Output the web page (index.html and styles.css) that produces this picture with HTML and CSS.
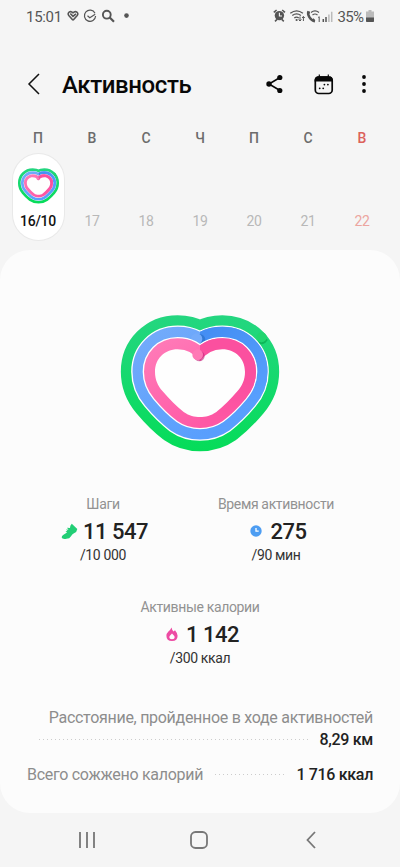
FILE: index.html
```html
<!DOCTYPE html>
<html lang="ru">
<head>
<meta charset="utf-8">
<meta name="viewport" content="width=device-width, initial-scale=1">
<title>Активность</title>
<link rel="stylesheet" href="styles.css">
</head>
<body>
<div class="screen">
  <div class="status">
    <span class="time">15:01</span>
    <svg class="status-left" width="64" height="16" viewBox="0 0 64 16" fill="none" stroke="#555" stroke-width="1.6">
      <path d="M6 12.300 1.800 7.600C-.3 4.800 3.300 2 6 4.800c2.700-2.800 6.300 0 4.200 2.800L6 12.300M3.300 5.500 6 8.300l3-2.500"/>
      <path d="M28 5.200A5.600 5.600 0 1 0 28.600 8M20.500 7.800l2.300 2 5.400-3.500" stroke-width="1.2"/>
      <circle cx="39.800" cy="6.700" r="3.900" stroke-width="1.900"/><path d="m42.700 9.500 4.300 4.300" stroke-width="2.200"/>
      <circle cx="59.500" cy="7.600" r="2.300" fill="#555" stroke="none"/>
    </svg>
    <svg class="status-right" width="62" height="16" viewBox="0 0 62 16" fill="none" stroke="#555" stroke-width="1.300">
      <circle cx="6.400" cy="7.600" r="4.700" fill="#555" stroke="none"/><path d="M6.400 4.800v3.200H9" stroke="#f5f5f5" stroke-width="1.100"/><path d="M.8 4.400 3.600 2M12 4.400 9.200 2M2 13.400l2-2M10.800 13.400l-2-2" stroke-width="1.500"/>
      <path d="M17.300 5.200q6.300-4.800 12.600 0M19.300 7.600q4.300-3.300 8.600 0M21.300 10q2.200-1.700 4.500 0"/>
      <circle cx="23.600" cy="12" r="1.100" fill="#555" stroke="none"/><path d="M27 8.500v4.500m-1.400-1.500L27 13l1.400-1.500M30.400 13V8.500M29 10l1.400-1.500L31.800 10" stroke-width="1"/>
      <path d="M35.500 3.300c-1.500 3.500 2 9.200 6.500 10" stroke-width="2.500"/><path d="M34.300 5.200l2.500-1M39.300 12.800l1.800-2" stroke-width="2"/>
      <path d="M38 4.500q4-3.200 8 0M39.500 7q2.500-2 5 0" stroke-width="1.200"/><path d="m45.200 9.500 1-.8V14" stroke-width="1"/>
      <path d="M50.300 14v-3M53 14V9" stroke-width="1.500"/><path d="M55.900 14V6.500M58.700 14V3.800" stroke="#bbb" stroke-width="1.500"/>
    </svg>
    <span class="percent">35%</span>
    <svg class="battery" width="8" height="12" viewBox="0 0 8 12"><path fill="#bbb" d="M2.500 0h3v1.500H8V12H0V1.500h2.500z"/><path fill="#555" d="M0 7.500h8V11q0 1-1 1H1q-1 0-1-1z"/></svg>
  </div>

  <header class="bar">
    <svg class="back" width="14" height="22" viewBox="0 0 14 22" fill="none" stroke="#111" stroke-width="1.500"><path d="M12 1 2 11l10 10"/></svg>
    <h1>Активность</h1>
    <svg class="share" width="18" height="20" viewBox="0 0 18 20"><path d="M14 3.500 3 10l11 6.500" fill="none" stroke="#080808" stroke-width="1.600"/><g fill="#080808"><circle cx="3" cy="10" r="2.700"/><circle cx="13.800" cy="3.500" r="2.600"/><circle cx="13.800" cy="16.500" r="2.600"/></g></svg>
    <svg class="calendar" width="20" height="21" viewBox="0 0 20 21" fill="#080808"><rect x="1.300" y="3" width="16.900" height="16.500" rx="3.500" fill="none" stroke="#080808" stroke-width="1.700"/><path d="M.6 7.500V6q0-3.500 4-3.700h10.300q4 .2 4 3.700v1.500zM4.700.5h1.200V3H4.700zM13.700.5h1.200V3h-1.200z"/><circle cx="10.400" cy="10.600" r=".9"/><circle cx="13.900" cy="10.600" r=".9"/><circle cx="5.700" cy="14.300" r=".9"/><circle cx="9.200" cy="14.300" r=".9"/></svg>
    <svg class="more" width="6" height="20" viewBox="0 0 6 20" fill="#080808"><circle cx="3" cy="3" r="1.900"/><circle cx="3" cy="10" r="1.900"/><circle cx="3" cy="17" r="1.900"/></svg>
  </header>

  <div class="week">
    <div class="day"><b>П</b><div class="pill"><svg width="41" height="36" viewBox="33 31 474 408"><use href="#heart"/></svg><span>16/10</span></div></div>
    <div class="day"><b>В</b><i>17</i></div>
    <div class="day"><b>С</b><i>18</i></div>
    <div class="day"><b>Ч</b><i>19</i></div>
    <div class="day"><b>П</b><i>20</i></div>
    <div class="day"><b>С</b><i>21</i></div>
    <div class="day sunday"><b>В</b><i>22</i></div>
  </div>

  <main class="card">
    <svg class="heart" width="180" height="155" viewBox="0 0 540 465">
      <defs>
        <path id="base" d="M270 169Q245 133 203 133C163 133 135 162 135 200C135 224 143 241 158 259C178 283 200 305 221 321C238 333 253 336 270 336C287 336 302 333 319 321C340 305 362 283 382 259C397 241 405 224 405 200C405 162 377 133 337 133Q295 133 270 169Z"/>
        <linearGradient id="green" gradientUnits="userSpaceOnUse" x1="0" y1="32" x2="0" y2="438"><stop stop-color="#24d680"/><stop offset="1" stop-color="#05dc59"/></linearGradient>
        <linearGradient id="blue" gradientUnits="userSpaceOnUse" x1="100" y1="70" x2="270" y2="400"><stop stop-color="#74abfa"/><stop offset="1" stop-color="#599ffd"/></linearGradient>
        <linearGradient id="blueShade" gradientUnits="userSpaceOnUse" x1="270" y1="80" x2="450" y2="260"><stop stop-color="#438df3"/><stop offset="1" stop-color="#569efc"/></linearGradient>
        <linearGradient id="blueFade" gradientUnits="userSpaceOnUse" x1="0" y1="80" x2="0" y2="390"><stop stop-color="#fff"/><stop offset=".5" stop-color="#fff"/><stop offset="1" stop-color="#000"/></linearGradient>
        <mask id="fade" maskUnits="userSpaceOnUse" x="0" y="0" width="540" height="465"><rect x="270" width="270" height="465" fill="url(#blueFade)"/></mask>
        <linearGradient id="pink" gradientUnits="userSpaceOnUse" x1="120" y1="110" x2="270" y2="365"><stop stop-color="#ff7bb8"/><stop offset="1" stop-color="#ff5aa6"/></linearGradient>
        <g id="heart" stroke-linejoin="round">
          <use href="#base" fill="url(#green)" stroke="url(#green)" stroke-width="205"/>
          <path d="M444 111q15 10 27-8" fill="none" stroke="#009c40" stroke-width="6" opacity=".55"/>
          <circle cx="455" cy="97" r="15" fill="#20d56f"/>
          <use href="#base" fill="#fff" stroke="#fff" stroke-width="143"/>
          <use href="#base" fill="url(#blue)" stroke="url(#blue)" stroke-width="135"/>
          <g mask="url(#fade)"><use href="#base" fill="url(#blueShade)" stroke="url(#blueShade)" stroke-width="135"/></g>
          <circle cx="269" cy="104" r="17" fill="#2368be" opacity=".55"/>
          <circle cx="260" cy="102" r="17" fill="#74abfa"/>
          <use href="#base" fill="#fff" stroke="#fff" stroke-width="74"/>
          <use href="#base" fill="url(#pink)" stroke="url(#pink)" stroke-width="66"/>
          <g mask="url(#fade)"><use href="#base" fill="#fb509f" stroke="#fb509f" stroke-width="66"/></g>
          <use href="#base" fill="#fefefe"/>
          <circle cx="268" cy="153" r="16" fill="#c2277b" opacity=".6"/>
          <circle cx="263" cy="149" r="16" fill="#ff79b5"/>
        </g>
      </defs>
      <use href="#heart"/>
    </svg>
    <section class="stats">
      <div class="stat steps"><h2>Шаги</h2><p><svg width="17" height="17" viewBox="0 0 17 17"><path fill="#22ce75" d="M10.800.8 16.300 6q-.3 3-3.300 4.200-2 1-3 3-1.300 2.600-4.500 2.600Q1 16.500.7 14.500q-.2-1.700 1.800-2.800L6 9.500 4.500 8.300l2-.2L5 6.500l2.500.2L6 4.800l3 .2q-.2-2.500 1.800-4.200"/></svg><strong>11 547</strong></p><small>/10 000</small></div>
      <div class="stat time-stat"><h2>Время активности</h2><p><svg width="12" height="12" viewBox="0 0 12 12"><circle cx="6" cy="6" r="5.700" fill="#4d9df2"/><path d="M6 3v3.200h2.700" fill="none" stroke="#fff" stroke-width="1.300"/></svg><strong>275</strong></p><small>/90 мин</small></div>
      <div class="stat calories"><h2>Активные калории</h2><p><svg width="12" height="15" viewBox="0 0 12 15"><path fill="#ed4ba3" fill-rule="evenodd" d="M5.500.5q.5 2.500 2 4L9 3.300q2.600 3 2.600 5.500Q11.600 14 6 14 .4 14 .4 8.800q0-2.300 2-4.300 2.300-2 3.100-4M6 6.500Q3.300 9 3.300 10.300q0 2 2.700 2t2.700-2Q8.700 9 6 6.500"/></svg><strong>1 142</strong></p><small>/300 ккал</small></div>
    </section>
    <section class="totals">
      <div class="distance"><span>Расстояние, пройденное в ходе активностей</span></div>
      <div class="row first"><em></em><strong>8,29 км</strong></div>
      <div class="row second"><span>Всего сожжено калорий</span><em></em><strong>1 716 ккал</strong></div>
    </section>
  </main>

  <nav class="nav">
    <svg width="18" height="18" viewBox="0 0 18 18" stroke="#777" stroke-width="1.800"><path d="M2 1v16M9 1v16M16 1v16"/></svg>
    <svg width="18" height="18" viewBox="0 0 18 18"><rect x="1" y="1" width="16" height="16" rx="4.500" fill="none" stroke="#777" stroke-width="1.800"/></svg>
    <svg width="10" height="18" viewBox="0 0 10 18" fill="none" stroke="#777" stroke-width="1.800"><path d="M9 1 1.500 9 9 17"/></svg>
  </nav>
</div>
</body>
</html>
```
FILE: styles.css
```css
* { box-sizing: border-box; }
body { margin: 0; background: #f5f5f5; font-family: Roboto, sans-serif; color: #222; }
h1, h2, p { margin: 0; }
svg { display: block; flex: none; overflow: visible; }
.screen { width: 400px; height: 867px; display: flex; flex-direction: column; overflow: hidden; }
.status { height: 32px; display: flex; align-items: center; padding: 0 26px; color: #555; font-size: 15px; white-space: nowrap; }
.time { width: 42px; padding-top: 1px; letter-spacing: -.3px; }
.status-right { margin-left: 142px; }
.percent { width: 27px; margin-left: 2px; padding-top: 1px; font-size: 15px; letter-spacing: -.6px; }
.battery { margin-left: 2px; }
.bar { height: 88px; padding-top: 16px; display: flex; align-items: center; }
.back { margin-left: 27px; }
h1 { width: 203px; margin-left: 21px; padding-top: 2px; font-size: 24px; letter-spacing: -.4px; line-height: 32px; font-weight: 500; color: #080808; }
.share { margin-left: 1px; }
.calendar { margin-left: 30px; }
.more { margin-left: 27px; }
.week { height: 130px; padding: 0 11px; display: grid; grid-template-columns: repeat(7, 54px); }
.day { display: flex; flex-direction: column; align-items: center; padding-top: 9px; }
.day b { height: 18px; line-height: 18px; font-size: 14px; font-weight: 500; color: #6c6c6c; }
.day i { margin-top: 65px; line-height: 18px; font-size: 14px; letter-spacing: -.4px; font-style: normal; color: #b8b8b8; }
.day.sunday b { color: #dc625b; }
.day.sunday i { color: #eca5a0; }
.pill { width: 51px; height: 86px; margin-top: 7px; padding-top: 14px; border-radius: 26px; background: #fff; box-shadow: 0 0 0 1px #e9e9e9; display: flex; flex-direction: column; align-items: center; flex: none; }
.pill span { margin-top: 8px; line-height: 18px; font-size: 14px; letter-spacing: -.3px; font-weight: 500; color: #111; }
.card { height: 563px; padding-top: 55px; border-radius: 30px; background: #fcfcfc; flex: none; }
.heart { margin: 0 auto; }
.stats { display: grid; grid-template-columns: 173px 173px; grid-template-rows: 103px 103px; padding: 34px 0 0 16.5px; }
.stat { text-align: center; white-space: nowrap; }
.calories { grid-column: 1 / 3; margin-left: 21px; }
.stat h2 { font-size: 14px; letter-spacing: -.35px; line-height: 20px; font-weight: 400; color: #929292; }
.stat p { height: 34px; padding-top: 1px; display: flex; align-items: center; justify-content: center; gap: 5px; }
.stat p svg { margin-top: -1px; }
.stat p strong { font-size: 22px; letter-spacing: -.5px; line-height: 34px; font-weight: 500; }
.time-stat p, .calories p { gap: 8px; padding-left: 5px; }
.steps p { padding-left: 3px; }
.stat small { display: block; font-size: 14px; letter-spacing: -.35px; line-height: 14px; color: #333; }
.totals { padding: 7px 27px 0; font-size: 16px; letter-spacing: -.29px; }
.totals span { color: #8d8d8d; white-space: nowrap; }
.distance { text-align: right; line-height: 22px; }
.row { display: flex; align-items: center; height: 20px; }
.row strong { font-size: 16px; letter-spacing: -.32px; font-weight: 500; white-space: nowrap; }
.row em { flex: 1; height: 1px; margin: 0 12px; background: repeating-linear-gradient(90deg, #ccc 0 1px, transparent 1px 4px); }
.row.second { margin-top: 15px; }
.nav { height: 54px; display: flex; align-items: center; justify-content: space-between; padding: 0 84px 0 78px; }
.nav svg:nth-child(2) { margin-left: -4px; }
```
